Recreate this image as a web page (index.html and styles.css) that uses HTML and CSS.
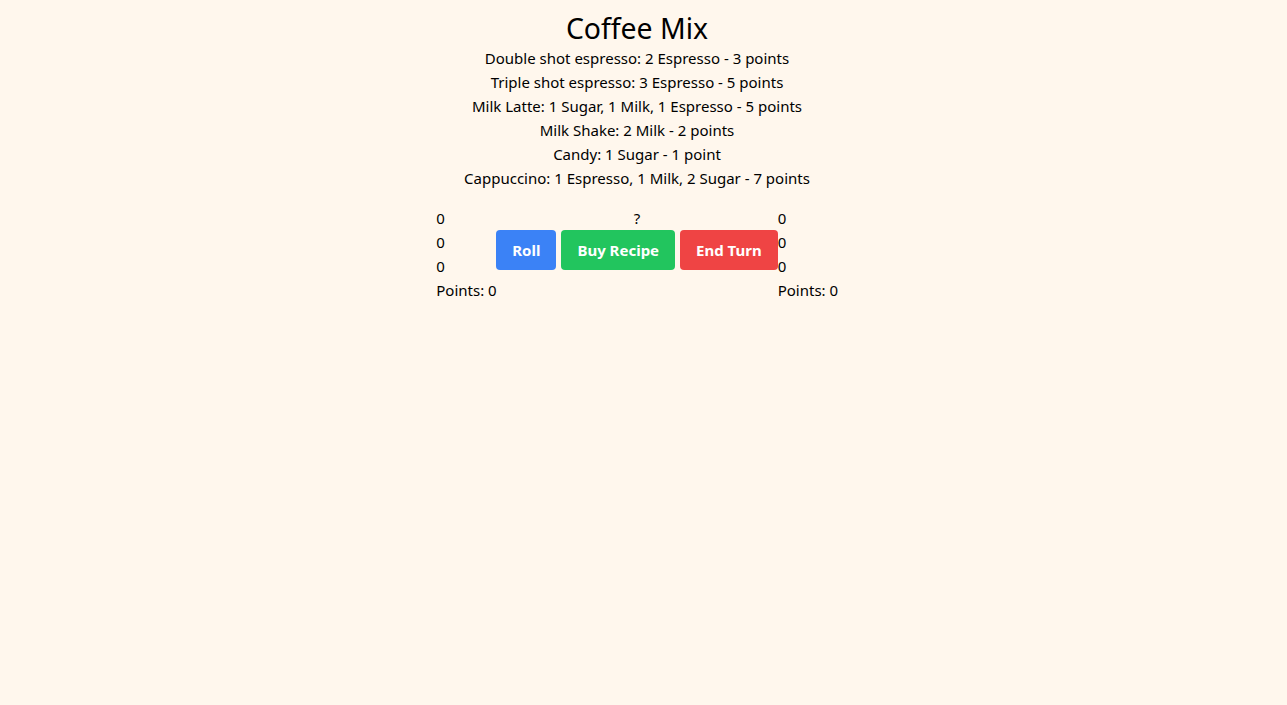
FILE: index.html
```html
<!DOCTYPE html>
<html>
<head>
<meta charset="utf-8">
<link rel="stylesheet" href="styles.css">
</head>
<body>
<div class="app">
  <h1 class="title">Coffee Mix</h1>
  <div class="recipes">
    <p>Double shot espresso: 2 Espresso - 3 points</p>
    <p>Triple shot espresso: 3 Espresso - 5 points</p>
    <p>Milk Latte: 1 Sugar, 1 Milk, 1 Espresso - 5 points</p>
    <p>Milk Shake: 2 Milk - 2 points</p>
    <p>Candy: 1 Sugar - 1 point</p>
    <p>Cappuccino: 1 Espresso, 1 Milk, 2 Sugar - 7 points</p>
  </div>
  <div class="board">
    <div class="player">
      <p>0</p>
      <p>0</p>
      <p>0</p>
      <p>Points: 0</p>
    </div>
    <div class="middle">
      <p class="dice">?</p>
      <div class="actions">
        <button class="btn btn-blue">Roll</button>
        <button class="btn btn-green">Buy Recipe</button>
        <button class="btn btn-red">End Turn</button>
      </div>
    </div>
    <div class="player">
      <p>0</p>
      <p>0</p>
      <p>0</p>
      <p>Points: 0</p>
    </div>
  </div>
</div>
</body>
</html>
```
FILE: styles.css
```css
* { box-sizing: border-box; }
html, body {
  margin: 0;
  padding: 0;
  background: #fff7ed;
}
body {
  font-family: "Segoe UI", "Noto Sans", sans-serif;
  font-size: 15px;
  line-height: 24px;
  color: #000;
  min-height: 705px;
}
.app {
  width: 1274px;
  padding-top: 10px;
  text-align: center;
}
p { margin: 0; }
.title {
  margin: 0;
  font-size: 28.4px;
  line-height: 36px;
  font-weight: 400;
}
.board {
  margin-top: 16px;
  display: flex;
  justify-content: center;
  text-align: left;
}
.player { width: 60px; white-space: nowrap; }
.middle {
  display: flex;
  flex-direction: column;
  align-items: center;
}
.dice { text-align: center; }
.actions {
  display: flex;
  gap: 5px;
}
.btn {
  font-family: inherit;
  font-size: 15px;
  line-height: 24px;
  font-weight: 700;
  color: #fff;
  border: 0;
  border-radius: 4px;
  padding: 8px 16px;
  margin: 0;
}
.btn-blue { background: #3b82f6; }
.btn-green { background: #22c55e; }
.btn-red { background: #ef4444; }
```
